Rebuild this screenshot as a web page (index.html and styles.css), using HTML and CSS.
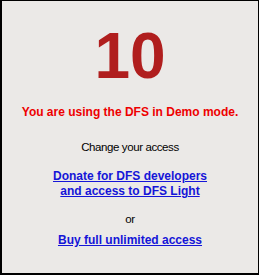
FILE: index.html
```html
<!DOCTYPE html>
<html lang="en">

<head>
    <meta charset="UTF-8">
    <meta name="viewport" content="width=device-width, initial-scale=1.0">
    <title>DFS Demo</title>
    <link rel="stylesheet" href="styles.css">
</head>

<body>
    <div class="panel">
        <div class="counter">10</div>
        <p class="warning">You are using the DFS in Demo mode.</p>
        <p class="label">Change your access</p>
        <a class="link donate" href="#">Donate for DFS developers<br>and access to DFS Light</a>
        <p class="label or">or</p>
        <a class="link buy" href="#">Buy full unlimited access</a>
    </div>
</body>

</html>
```

FILE: styles.css
```css
* {
    box-sizing: border-box;
}

body {
    margin: 0;
    font-family: "Liberation Sans", Arial, sans-serif;
}

.panel {
    width: 259px;
    height: 275px;
    background-color: #ebe9e7;
    border-style: solid;
    border-color: #000;
    border-width: 1px 1px 2px 2px;
    display: flex;
    flex-direction: column;
    align-items: center;
    text-align: center;
    padding-top: 23px;
}

.counter {
    font-size: 64px;
    line-height: 64px;
    font-weight: bold;
    color: #b01e1e;
}

.warning {
    margin: 16px 0 0;
    font-size: 12px;
    line-height: 16px;
    font-weight: bold;
    color: #ee0000;
}

.label {
    margin: 19px 0 0;
    font-size: 11.5px;
    line-height: 16px;
    letter-spacing: -0.4px;
    color: #000;
}

.link {
    display: block;
    font-size: 12px;
    line-height: 15px;
    font-weight: bold;
    color: #1515d8;
    text-decoration: underline;
}

.donate {
    margin-top: 14px;
}

.or {
    margin-top: 12px;
}

.buy {
    margin-top: 6px;
}
```
